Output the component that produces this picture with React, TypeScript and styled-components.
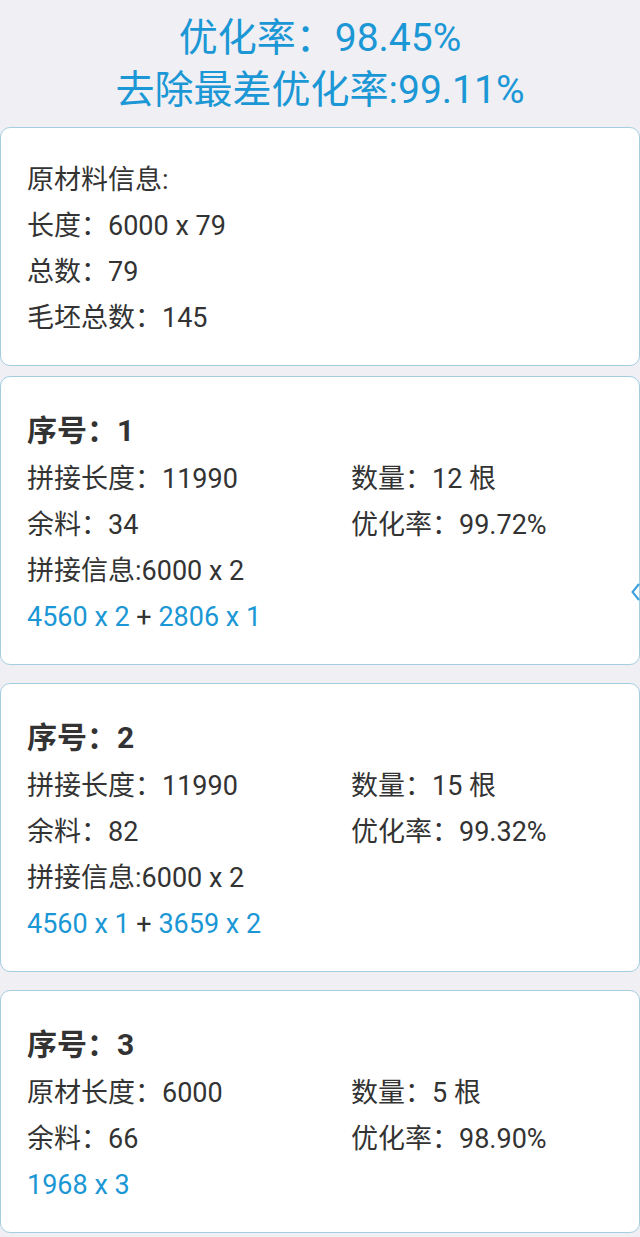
import React from 'react';
import styled, { createGlobalStyle } from 'styled-components';

const GlobalStyle = createGlobalStyle`
  html, body {
    margin: 0;
    padding: 0;
    background: #efeff4;
  }
  body {
    font-family: Roboto, "Noto Sans CJK SC", sans-serif;
    color: #333;
  }
`;

const Page = styled.div`
  width: 640px;
  min-height: 1237px;
  background: #efeff4;
  overflow: hidden;
`;

const Header = styled.header`
  padding: 12px 0 11px;
  text-align: center;
  color: #1b97d5;
  font-size: 39px;
  line-height: 52px;
`;

const Card = styled.section<{ $gap: number }>`
  background: #fff;
  border: 1px solid #a3cde0;
  border-radius: 10px;
  padding: 29px 26px 24px;
  margin-bottom: ${(p) => p.$gap}px;
  font-size: 27px;
  line-height: 46px;
`;

const Title = styled.div`
  font-size: 30px;
  font-weight: 700;
  line-height: 50px;
`;

const Grid = styled.div`
  display: grid;
  grid-template-columns: 324px 1fr;
`;

const Line = styled.div`
  white-space: nowrap;
`;

const Blue = styled.span`
  color: #1b97d5;
`;

const SideTab = styled.div`
  position: fixed;
  right: 0;
  top: 581px;
  width: 10px;
  height: 22px;
  display: flex;
  align-items: center;
  justify-content: flex-end;
`;

interface Item {
  no: number;
  lenLabel: string;
  len: string;
  count: number;
  rest: number;
  rate: string;
  splice?: string;
  parts: string[];
}

const items: Item[] = [
  { no: 1, lenLabel: '拼接长度', len: '11990', count: 12, rest: 34, rate: '99.72%', splice: '6000 x 2', parts: ['4560 x 2', '2806 x 1'] },
  { no: 2, lenLabel: '拼接长度', len: '11990', count: 15, rest: 82, rate: '99.32%', splice: '6000 x 2', parts: ['4560 x 1', '3659 x 2'] },
  { no: 3, lenLabel: '原材长度', len: '6000', count: 5, rest: 66, rate: '98.90%', parts: ['1968 x 3'] },
];

function App() {
  return (
    <Page>
      <GlobalStyle />
      <Header>
        <div>优化率：98.45%</div>
        <div>去除最差优化率:99.11%</div>
      </Header>

      <Card $gap={10}>
        <Line>原材料信息:</Line>
        <Line>长度：6000 x 79</Line>
        <Line>总数：79</Line>
        <Line>毛坯总数：145</Line>
      </Card>

      {items.map((it) => (
        <Card key={it.no} $gap={18}>
          <Title>序号：{it.no}</Title>
          <Grid>
            <Line>{it.lenLabel}：{it.len}</Line>
            <Line>数量：{it.count} 根</Line>
            <Line>余料：{it.rest}</Line>
            <Line>优化率：{it.rate}</Line>
          </Grid>
          {it.splice && <Line>拼接信息:{it.splice}</Line>}
          <Line>
            {it.parts.map((p, i) => (
              <React.Fragment key={p}>
                {i > 0 && ' + '}
                <Blue>{p}</Blue>
              </React.Fragment>
            ))}
          </Line>
        </Card>
      ))}

      <SideTab>
        <svg width="9" height="20" viewBox="0 0 9 20">
          <polyline points="8,2 1.5,10 8,18" fill="none" stroke="#3a9fdc" strokeWidth="2" />
        </svg>
      </SideTab>
    </Page>
  );
}

export default App;
